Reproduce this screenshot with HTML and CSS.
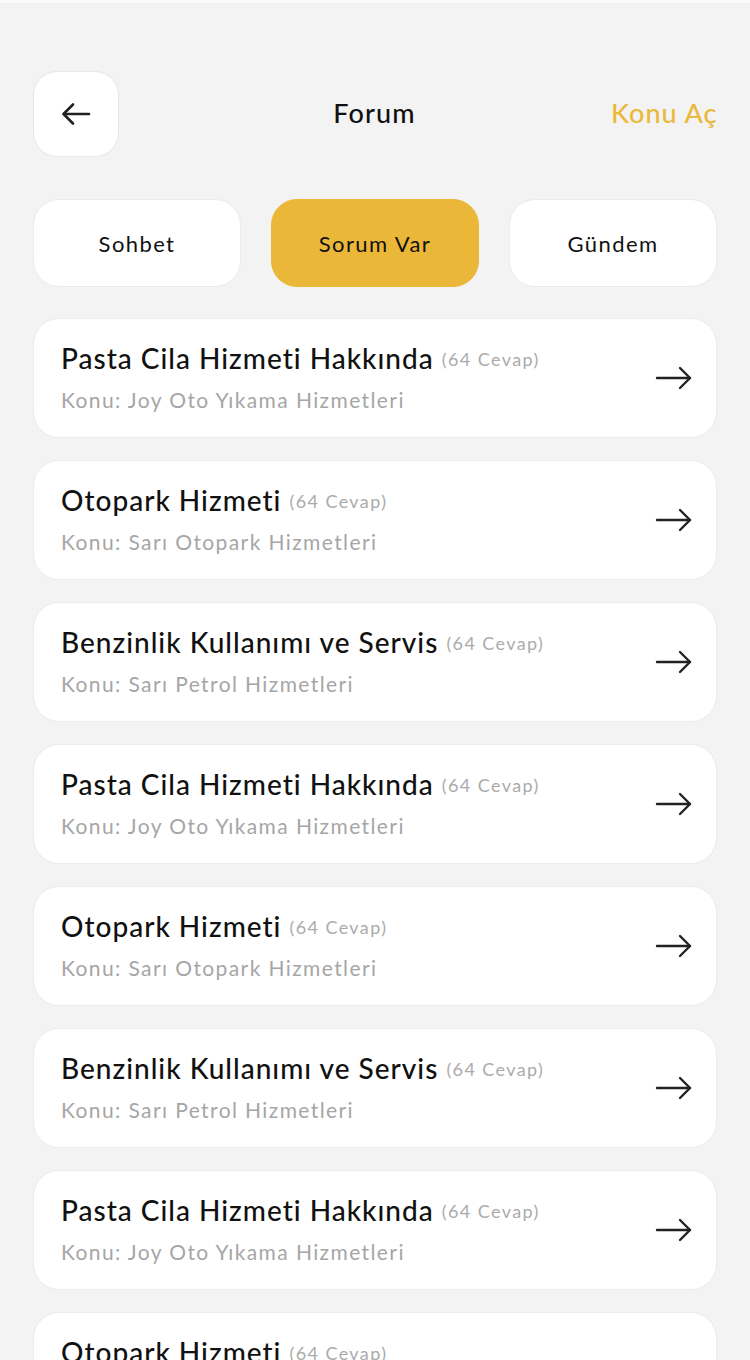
FILE: index.html
```html
<!DOCTYPE html>
<html lang="tr">
<head>
<meta charset="utf-8">
<title>Forum</title>
<link rel="stylesheet" href="styles.css">
</head>
<body>
<div class="topline"></div>
<main class="page">
  <header class="header">
    <button class="back" aria-label="Geri">
      <svg width="40" height="40" viewBox="0 0 40 40" fill="none" stroke="#222" stroke-width="2.6" stroke-linecap="round" stroke-linejoin="round"><path d="M33 20H8"/><path d="M17 10.5L7.5 20L17 29.5"/></svg>
    </button>
    <h1 class="title">Forum</h1>
    <a class="action">Konu Aç</a>
  </header>
  <nav class="tabs">
    <button class="tab">Sohbet</button>
    <button class="tab active">Sorum Var</button>
    <button class="tab">Gündem</button>
  </nav>
  <section class="list">
    <article class="card"><div class="text"><div class="t">Pasta Cila Hizmeti Hakkında <span class="count">(64 Cevap)</span></div><div class="s">Konu: Joy Oto Yıkama Hizmetleri</div></div><svg class="arrow" width="40" height="40" viewBox="0 0 40 40" fill="none" stroke="#222" stroke-width="2.4" stroke-linecap="round" stroke-linejoin="round"><path d="M3 20H36"/><path d="M26 10L36 20L26 30"/></svg></article>
    <article class="card"><div class="text"><div class="t">Otopark Hizmeti <span class="count">(64 Cevap)</span></div><div class="s">Konu: Sarı Otopark Hizmetleri</div></div><svg class="arrow" width="40" height="40" viewBox="0 0 40 40" fill="none" stroke="#222" stroke-width="2.4" stroke-linecap="round" stroke-linejoin="round"><path d="M3 20H36"/><path d="M26 10L36 20L26 30"/></svg></article>
    <article class="card"><div class="text"><div class="t">Benzinlik Kullanımı ve Servis <span class="count">(64 Cevap)</span></div><div class="s">Konu: Sarı Petrol Hizmetleri</div></div><svg class="arrow" width="40" height="40" viewBox="0 0 40 40" fill="none" stroke="#222" stroke-width="2.4" stroke-linecap="round" stroke-linejoin="round"><path d="M3 20H36"/><path d="M26 10L36 20L26 30"/></svg></article>
    <article class="card"><div class="text"><div class="t">Pasta Cila Hizmeti Hakkında <span class="count">(64 Cevap)</span></div><div class="s">Konu: Joy Oto Yıkama Hizmetleri</div></div><svg class="arrow" width="40" height="40" viewBox="0 0 40 40" fill="none" stroke="#222" stroke-width="2.4" stroke-linecap="round" stroke-linejoin="round"><path d="M3 20H36"/><path d="M26 10L36 20L26 30"/></svg></article>
    <article class="card"><div class="text"><div class="t">Otopark Hizmeti <span class="count">(64 Cevap)</span></div><div class="s">Konu: Sarı Otopark Hizmetleri</div></div><svg class="arrow" width="40" height="40" viewBox="0 0 40 40" fill="none" stroke="#222" stroke-width="2.4" stroke-linecap="round" stroke-linejoin="round"><path d="M3 20H36"/><path d="M26 10L36 20L26 30"/></svg></article>
    <article class="card"><div class="text"><div class="t">Benzinlik Kullanımı ve Servis <span class="count">(64 Cevap)</span></div><div class="s">Konu: Sarı Petrol Hizmetleri</div></div><svg class="arrow" width="40" height="40" viewBox="0 0 40 40" fill="none" stroke="#222" stroke-width="2.4" stroke-linecap="round" stroke-linejoin="round"><path d="M3 20H36"/><path d="M26 10L36 20L26 30"/></svg></article>
    <article class="card"><div class="text"><div class="t">Pasta Cila Hizmeti Hakkında <span class="count">(64 Cevap)</span></div><div class="s">Konu: Joy Oto Yıkama Hizmetleri</div></div><svg class="arrow" width="40" height="40" viewBox="0 0 40 40" fill="none" stroke="#222" stroke-width="2.4" stroke-linecap="round" stroke-linejoin="round"><path d="M3 20H36"/><path d="M26 10L36 20L26 30"/></svg></article>
    <article class="card"><div class="text"><div class="t">Otopark Hizmeti <span class="count">(64 Cevap)</span></div><div class="s">Konu: Sarı Otopark Hizmetleri</div></div><svg class="arrow" width="40" height="40" viewBox="0 0 40 40" fill="none" stroke="#222" stroke-width="2.4" stroke-linecap="round" stroke-linejoin="round"><path d="M3 20H36"/><path d="M26 10L36 20L26 30"/></svg></article>
  </section>
</main>
</body>
</html>
```
FILE: styles.css
```css
html, body {
  margin: 0;
  padding: 0;
  background: #f3f3f3;
  font-family: Lato, "Open Sans", sans-serif;
  color: #111;
}
body { height: 1360px; overflow: hidden; }
.topline { height: 3px; background: #fafafa; }
.page {
  padding: 68px 33px 0;
}
.header {
  display: grid;
  grid-template-columns: 86px 1fr auto;
  align-items: center;
  height: 86px;
}
.back {
  width: 86px;
  height: 86px;
  border-radius: 24px;
  border: 1px solid #e6e6ec;
  background: #fff;
  display: flex;
  align-items: center;
  justify-content: center;
  padding: 0;
}
.title {
  margin: 0 0 3px;
  text-align: center;
  font-size: 27px;
  font-weight: 500;
  letter-spacing: 1.2px;
  padding-left: 19px;
}
.action {
  font-size: 27px;
  font-weight: 500;
  letter-spacing: 1px;
  color: #eab93a;
  width: 106px;
  text-align: right;
  white-space: nowrap;
  margin-bottom: 3px;
}
.tabs {
  margin-top: 42px;
  display: grid;
  grid-template-columns: 1fr 1fr 1fr;
  gap: 30px;
}
.tab {
  height: 88px;
  border-radius: 26px;
  border: 1px solid #ebebeb;
  background: #fff;
  font-family: inherit;
  font-size: 22px;
  letter-spacing: 1.4px;
  color: #111;
  padding: 0;
}
.tab.active {
  background: #eab738;
  border-color: #eab738;
}
.list {
  margin-top: 31px;
  display: flex;
  flex-direction: column;
  gap: 22px;
}
.card {
  height: 120px;
  box-sizing: border-box;
  border-radius: 26px;
  border: 1px solid #ebebeb;
  background: #fff;
  display: flex;
  align-items: center;
  justify-content: space-between;
  padding: 0 22px 0 27px;
}
.text { margin-top: -4px; }
.t {
  font-size: 28px;
  font-weight: 500;
  letter-spacing: 1px;
  color: #111;
  line-height: 34px;
  white-space: nowrap;
}
.count {
  font-size: 18px;
  letter-spacing: 1.4px;
  color: #ababab;
  font-weight: 400;
  vertical-align: 3px;
}
.s {
  margin-top: 12px;
  font-size: 21px;
  letter-spacing: 1.4px;
  color: #a6a6a6;
  line-height: 24px;
}
.arrow { flex: none; }
```
